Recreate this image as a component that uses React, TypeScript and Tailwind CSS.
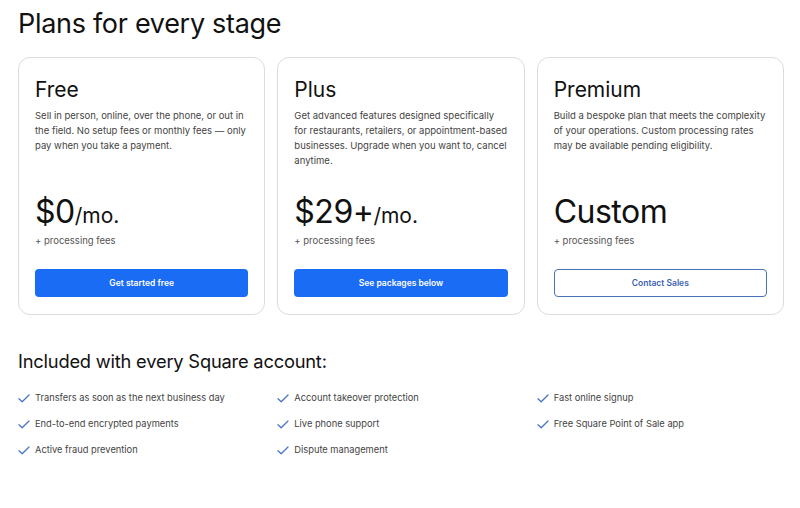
interface Plan {
  name: string;
  description: string;
  price: string;
  unit?: string;
  cta: string;
  outline?: boolean;
}

const plans: Plan[] = [
  {
    name: 'Free',
    description:
      'Sell in person, online, over the phone, or out in the field. No setup fees or monthly fees — only pay when you take a payment.',
    price: '$0',
    unit: '/mo.',
    cta: 'Get started free',
  },
  {
    name: 'Plus',
    description:
      'Get advanced features designed specifically for restaurants, retailers, or appointment-based businesses. Upgrade when you want to, cancel anytime.',
    price: '$29+',
    unit: '/mo.',
    cta: 'See packages below',
  },
  {
    name: 'Premium',
    description:
      'Build a bespoke plan that meets the complexity of your operations. Custom processing rates may be available pending eligibility.',
    price: 'Custom',
    cta: 'Contact Sales',
    outline: true,
  },
];

const included = [
  ['Transfers as soon as the next business day', 'End-to-end encrypted payments', 'Active fraud prevention'],
  ['Account takeover protection', 'Live phone support', 'Dispute management'],
  ['Fast online signup', 'Free Square Point of Sale app'],
];

function CheckMark() {
  return (
    <svg className="w-[12px] h-[9px] shrink-0" viewBox="0 0 12 9" fill="none">
      <path d="M1 4.8 L4.2 7.8 L11 1" stroke="#4a74c9" strokeWidth={1.3} strokeLinecap="round" strokeLinejoin="round" />
    </svg>
  );
}

export default function App() {
  return (
    <div
      className="w-[800px] h-[508px] bg-white pl-[18px] pr-[16px] pt-[6px] text-[#1a1a1a] overflow-hidden"
      style={{ fontFamily: 'Inter, "Noto Sans", sans-serif' }}
    >
      <h1 className="text-[27px] leading-[36px] tracking-[-0.3px] text-[#111]">Plans for every stage</h1>

      {/* Plan cards */}
      <div className="mt-[15px] grid grid-cols-3 gap-[12px]">
        {plans.map((plan) => (
          <div
            key={plan.name}
            className="rounded-[12px] border border-[#dcdcdc] pl-[16px] pr-[15px] pt-[18px] pb-[17px] flex flex-col"
          >
            <h2 className="text-[21px] leading-[28px] text-[#111]">{plan.name}</h2>
            <p className="mt-[4px] h-[76px] text-[9.5px] leading-[15px] text-[#444]">{plan.description}</p>
            <div className="mt-[11px] leading-[34px] text-[#111]">
              <span className="text-[32px] tracking-[-0.5px]">{plan.price}</span>
              {plan.unit && <span className="text-[21px]">{plan.unit}</span>}
            </div>
            <p className="text-[9.5px] leading-[14px] text-[#555]">+ processing fees</p>
            <button
              className={
                plan.outline
                  ? 'mt-[21px] mr-[1px] h-[28px] rounded-[4px] border border-[#4a72b8] bg-white text-[8.5px] font-semibold text-[#3d63b0]'
                  : 'mt-[21px] mr-[1px] h-[28px] rounded-[4px] bg-[#1a6cf5] text-[8.5px] font-semibold text-white'
              }
            >
              {plan.cta}
            </button>
          </div>
        ))}
      </div>

      {/* Included features */}
      <h2 className="mt-[34px] text-[18.3px] leading-[24px] tracking-[-0.2px] text-[#111]">
        Included with every Square account:
      </h2>
      <div className="mt-[18px] grid grid-cols-3 gap-[12px]">
        {included.map((col, i) => (
          <ul key={i} className="flex flex-col gap-[12px]">
            {col.map((item) => (
              <li key={item} className="flex items-center gap-[5px] h-[14px] text-[9.3px] text-[#444]">
                <CheckMark />
                <span>{item}</span>
              </li>
            ))}
          </ul>
        ))}
      </div>
    </div>
  );
}
